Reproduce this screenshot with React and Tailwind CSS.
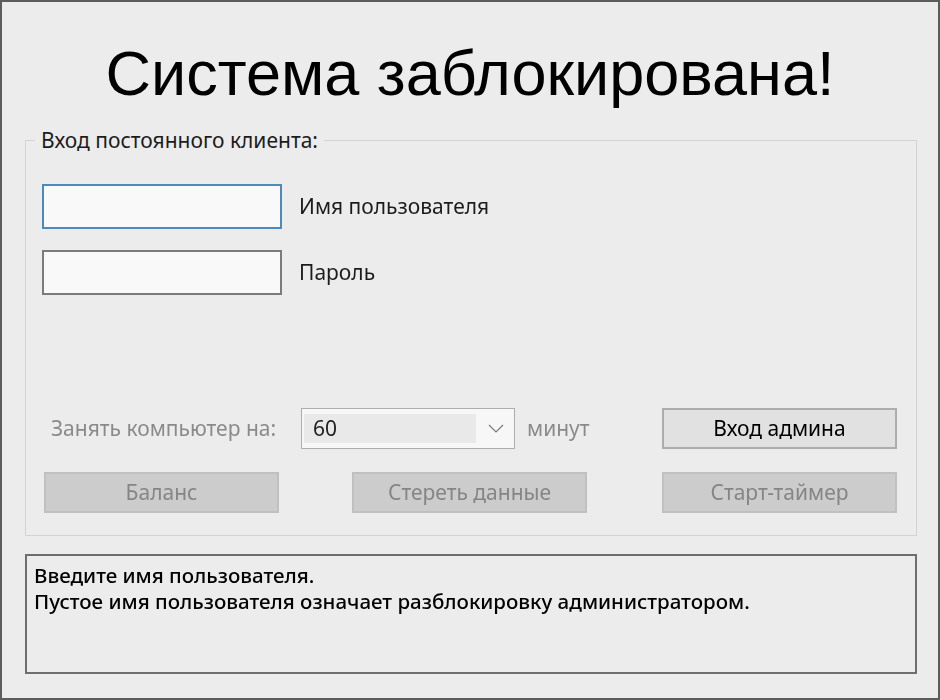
import React from 'react';

const ui = { fontFamily: '"Noto Sans", "Open Sans", sans-serif' };
const title = { fontFamily: '"Liberation Sans", Arial, sans-serif' };

const Btn = ({ children, disabled, className = '' }) => (
  <button
    disabled={disabled}
    className={
      'w-[235px] h-[41px] border-2 text-[21px] leading-none ' +
      (disabled
        ? 'bg-[#cccccc] border-[#c0c0c0] text-[#858585]'
        : 'bg-[#e1e1e1] border-[#adadad] text-black') +
      ' ' + className
    }
  >
    {children}
  </button>
);

const Chevron = () => (
  <svg width="16" height="9" viewBox="0 0 16 9" fill="none">
    <polyline points="1,1 8,8 15,1" stroke="#7a7a7a" strokeWidth="1.2" />
  </svg>
);

const App = () => {
  return (
    <div
      className="w-[940px] h-[700px] bg-[#ececec] border-2 border-[#5c5c5c] box-border flex flex-col"
      style={ui}
    >
      <h1
        className="text-center text-[63px] leading-none text-black pt-[40px]"
        style={title}
      >
        Система заблокирована!
      </h1>

      <fieldset className="ml-[23px] mr-[21px] mt-[22px] border border-[#d3d3d3] pb-[22px]">
        <legend className="ml-[9px] px-[6px] text-[21px] leading-[26px] text-[#1c1c1c]">
          Вход постоянного клиента:
        </legend>

        <div className="flex flex-col gap-[21px] mt-[31px] ml-[16px]">
          <div className="flex items-center gap-[17px]">
            <input
              type="text"
              autoFocus
              className="w-[240px] h-[45px] bg-[#f9f9f9] border-2 border-[#4b8bbb] outline-none px-2 text-[21px]"
            />
            <span className="text-[21px] text-[#1c1c1c]">Имя пользователя</span>
          </div>
          <div className="flex items-center gap-[17px]">
            <input
              type="password"
              className="w-[240px] h-[45px] bg-[#f9f9f9] border-2 border-[#7b7b7b] outline-none px-2 text-[21px]"
            />
            <span className="text-[21px] text-[#1c1c1c]">Пароль</span>
          </div>
        </div>

        <div className="flex items-center mt-[113px]">
          <span className="w-[275px] pl-[25px] text-[21px] text-[#8a8a8a]">Занять компьютер на:</span>
          <div className="w-[214px] h-[41px] border border-[#adadad] bg-[#f7f7f7] flex items-center pl-[2px] pr-[10px]">
            <div className="w-[172px] h-[29px] bg-[#e9e9e9] flex items-center pl-[9px] text-[21px] text-[#222]">
              60
            </div>
            <div className="ml-auto">
              <Chevron />
            </div>
          </div>
          <span className="ml-[12px] text-[21px] text-[#8a8a8a]">минут</span>
          <Btn className="ml-auto mr-[19px]">Вход админа</Btn>
        </div>

        <div className="flex items-center mt-[23px] ml-[18px]">
          <Btn disabled>Баланс</Btn>
          <Btn disabled className="ml-[73px]">Стереть данные</Btn>
          <Btn disabled className="ml-[75px]">Старт-таймер</Btn>
        </div>
      </fieldset>

      <div className="ml-[23px] mr-[21px] mt-[18px] h-[120px] border-2 border-[#6e6e6e] pl-[7px] pt-[6px] text-[20.5px] leading-[26px] font-medium text-black">
        <div>Введите имя пользователя.</div>
        <div>Пустое имя пользователя означает разблокировку администратором.</div>
      </div>
    </div>
  );
};

export default App;
